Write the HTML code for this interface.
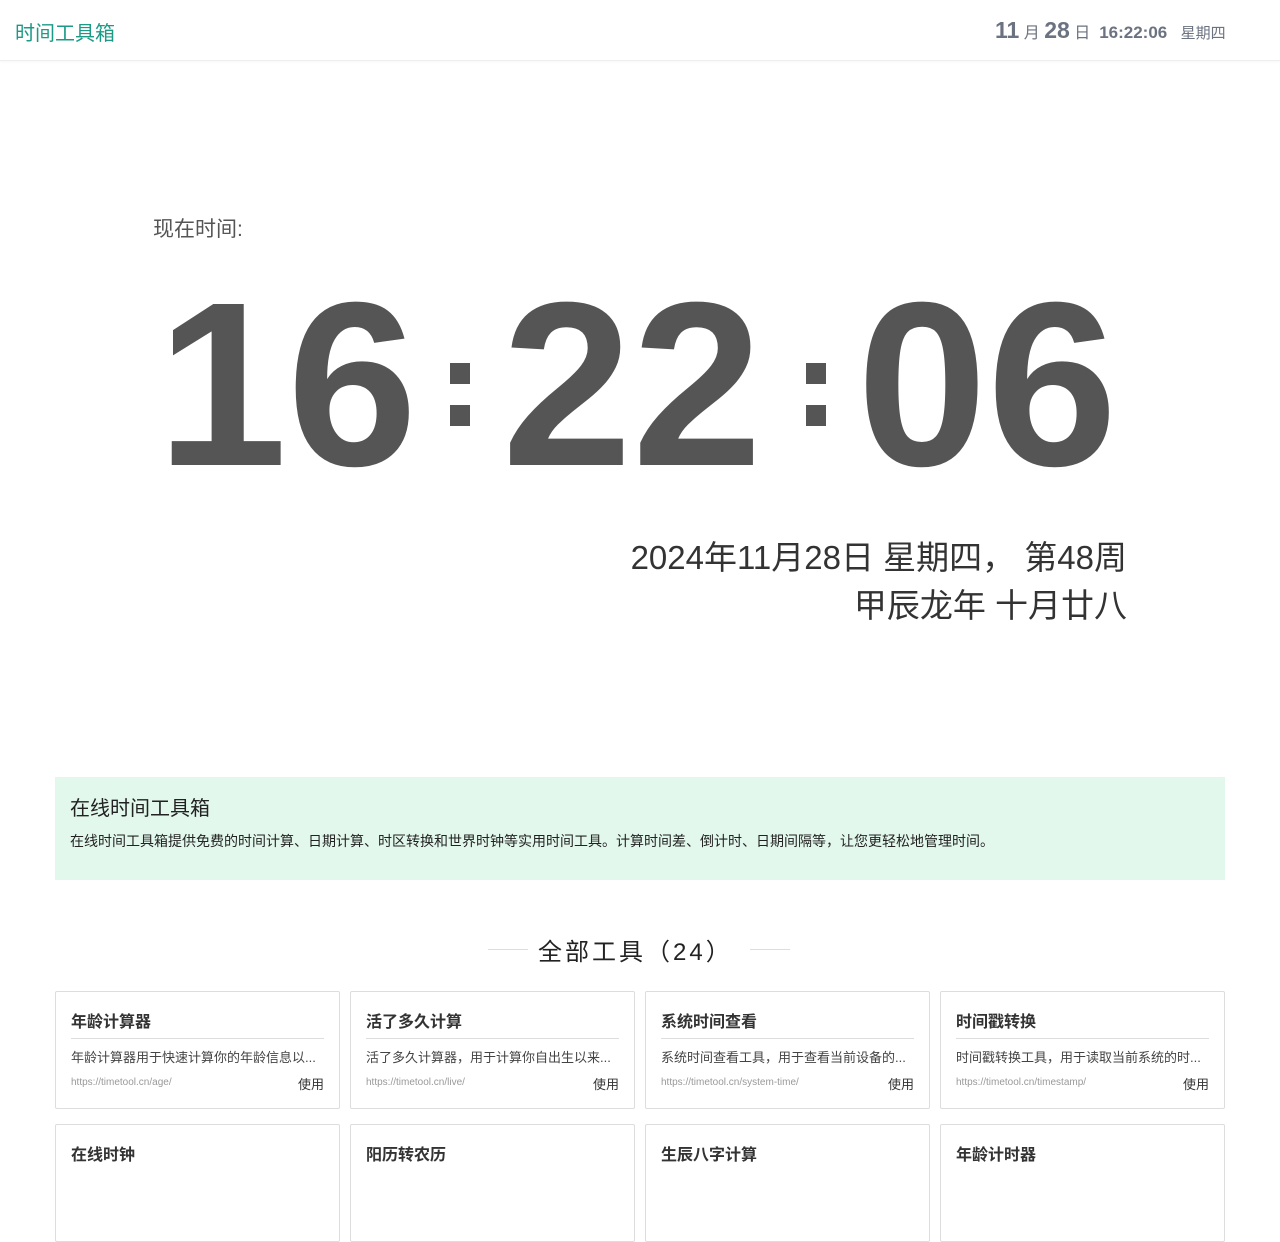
<!DOCTYPE html>
<html><head><meta charset="utf-8"><style>
*{margin:0;padding:0;box-sizing:border-box}
body{width:1280px;height:1167px;overflow:hidden;background:#fff;font-family:"Liberation Sans","Noto Sans CJK SC",sans-serif;position:relative;color:#333}
.hdr{position:absolute;left:0;top:0;width:1280px;height:61px;border-bottom:1px solid #eee;box-shadow:0 1px 3px rgba(0,0,0,.04)}
.logo{position:absolute;left:15px;top:17px;font-size:20px;color:#1b9a86}
.rt{position:absolute;left:995px;top:17px;color:#6b7280;white-space:nowrap}
.rt b{font-size:23px}.rt s{text-decoration:none;font-size:16px}
.abs{position:absolute;white-space:nowrap}
.big{position:absolute;top:267px;font:bold 234px/1 "Liberation Sans",sans-serif;color:#555}
.col{position:absolute;width:20px;height:21px;background:#555}
.card{position:absolute;width:285px;height:118px;border:1px solid #ddd;border-radius:2px;background:#fff}
.card h3{position:absolute;left:15px;top:16px;font-size:16px;color:#333;font-weight:bold}
.card .ln{position:absolute;left:15px;right:15px;top:46px;border-top:1px solid #ddd}
.card p{position:absolute;left:15px;top:55px;font-size:13px;color:#444}
.card .u{position:absolute;left:15px;top:85px;font-size:10px;color:#999}
.card .go{position:absolute;right:15px;top:82px;font-size:13px;color:#333}
</style></head><body>
<div class="hdr"><div class="logo">时间工具箱</div>
<div class="rt"><b>11</b> <s>月</s> <b>28</b> <s>日</s> &nbsp;<b style="font-size:17px">16:22:06</b> &nbsp; <s style="font-size:15px">星期四</s></div></div>
<div class="abs" style="left:153px;top:213px;font-size:21px;color:#555">现在时间:</div>
<div class="big" style="left:157px">16</div>
<div class="col" style="left:450px;top:363px"></div><div class="col" style="left:450px;top:405px"></div>
<div class="big" style="left:502px">22</div>
<div class="col" style="left:806px;top:363px"></div><div class="col" style="left:806px;top:405px"></div>
<div class="big" style="left:857px">06</div>
<div class="abs" style="right:153px;top:534px;font-size:33px;color:#333;text-align:right;line-height:48px">2024年11月28日 星期四， 第48周<br>甲辰龙年 十月廿八</div>
<div class="abs" style="left:55px;top:777px;width:1170px;height:103px;background:#e3f8ec">
<div class="abs" style="left:15px;top:15px;font-size:20px;color:#222">在线时间工具箱</div>
<div class="abs" style="left:15px;top:54px;font-size:14px;color:#222">在线时间工具箱提供免费的时间计算、日期计算、时区转换和世界时钟等实用时间工具。计算时间差、倒计时、日期间隔等，让您更轻松地管理时间。</div></div>
<div class="abs" style="left:488px;top:949px;width:40px;border-top:1px solid #ddd"></div>
<div class="abs" style="left:750px;top:949px;width:40px;border-top:1px solid #ddd"></div>
<div class="abs" style="left:538px;top:932px;font-size:24px;letter-spacing:3px;color:#222">全部工具（24）</div>
<div class="card" style="left:55px;top:991px"><h3>年龄计算器</h3><div class="ln"></div><p>年龄计算器用于快速计算你的年龄信息以...</p><div class="u">https://timetool.cn/age/</div><div class="go">使用</div></div>
<div class="card" style="left:350px;top:991px"><h3>活了多久计算</h3><div class="ln"></div><p>活了多久计算器，用于计算你自出生以来...</p><div class="u">https://timetool.cn/live/</div><div class="go">使用</div></div>
<div class="card" style="left:645px;top:991px"><h3>系统时间查看</h3><div class="ln"></div><p>系统时间查看工具，用于查看当前设备的...</p><div class="u">https://timetool.cn/system-time/</div><div class="go">使用</div></div>
<div class="card" style="left:940px;top:991px"><h3>时间戳转换</h3><div class="ln"></div><p>时间戳转换工具，用于读取当前系统的时...</p><div class="u">https://timetool.cn/timestamp/</div><div class="go">使用</div></div>
<div class="card" style="left:55px;top:1124px"><h3>在线时钟</h3></div>
<div class="card" style="left:350px;top:1124px"><h3>阳历转农历</h3></div>
<div class="card" style="left:645px;top:1124px"><h3>生辰八字计算</h3></div>
<div class="card" style="left:940px;top:1124px"><h3>年龄计时器</h3></div>
</body></html>
